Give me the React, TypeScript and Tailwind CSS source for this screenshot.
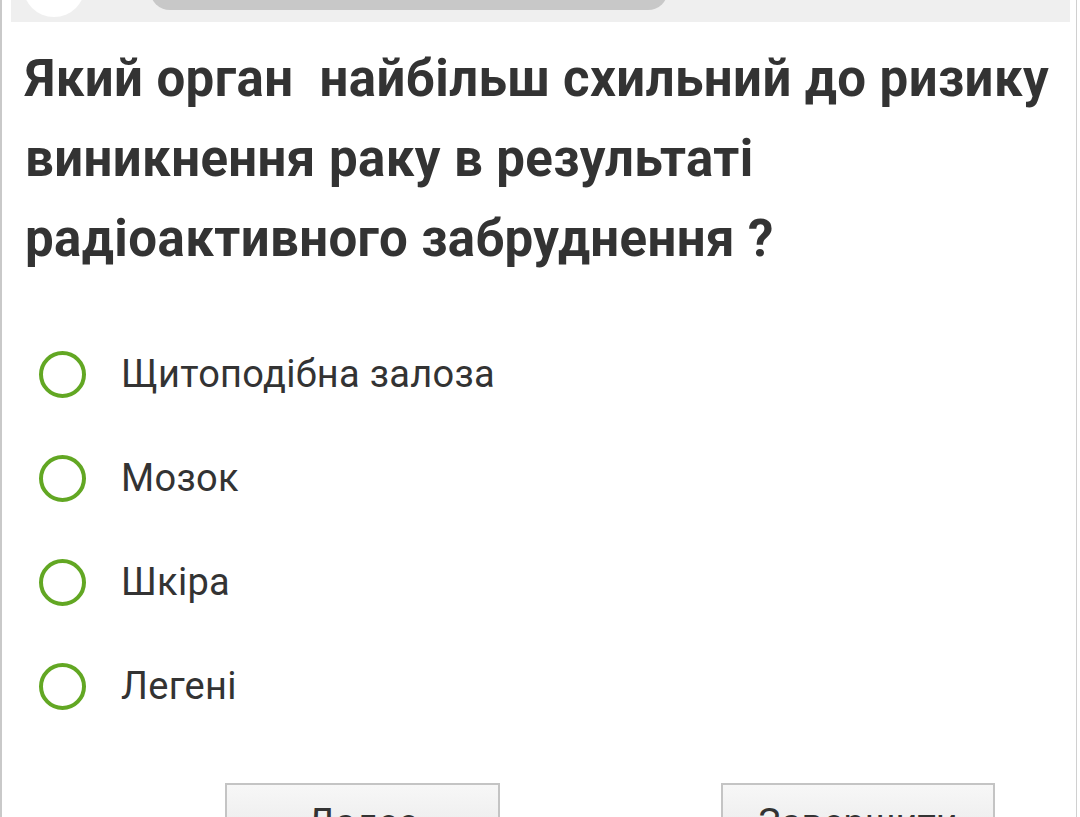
const options = ['Щитоподібна залоза', 'Мозок', 'Шкіра', 'Легені'];

export default function App() {
  return (
    <div className="w-[1080px] h-[817px] overflow-hidden bg-white font-['Roboto',sans-serif]">
      <div className="w-[1077px] h-full border-l-2 border-r border-l-[#c9c9c9] border-r-[#d0d0d0] flex flex-col">
        <div className="ml-[9px] w-[1059px] h-[22px] bg-[#efefef] overflow-hidden flex items-start shrink-0">
          <div className="ml-[12px] mt-[-45px] w-[62px] h-[62px] rounded-full bg-white shrink-0" />
          <div className="ml-[65px] mt-[-30px] w-[518px] h-[40px] rounded-full bg-[#c8c8c8] shrink-0" />
        </div>

        <h1 className="mt-[17px] pl-[23px] pr-[4px] text-[51px] leading-[80px] tracking-[0.4px] font-bold text-[#333] whitespace-pre-wrap">
          {'Який орган  найбільш схильний до ризику виникнення раку в результаті радіоактивного забруднення ?'}
        </h1>

        <div className="mt-[43px] flex flex-col">
          {options.map((o) => (
            <label key={o} className="h-[104px] flex items-center">
              <span className="ml-[37px] w-[47px] h-[47px] rounded-full border-[4px] border-[#62a723] shrink-0" />
              <span className="ml-[35px] text-[38px] tracking-[0.3px] text-[#333]">{o}</span>
            </label>
          ))}
        </div>

        <div className="mt-[45px] flex">
          <button className="ml-[223px] w-[275px] h-[70px] border-2 border-[#c4c4c4] bg-gradient-to-b from-[#f7f7f7] to-[#e8e8e8] text-[38px] text-[#333] pt-[10px] flex justify-center items-start">
            Далее
          </button>
          <button className="ml-[221px] w-[274px] h-[70px] border-2 border-[#c4c4c4] bg-gradient-to-b from-[#f7f7f7] to-[#e8e8e8] text-[38px] text-[#333] pt-[10px] flex justify-center items-start">
            Завершити
          </button>
        </div>
      </div>
    </div>
  );
}
